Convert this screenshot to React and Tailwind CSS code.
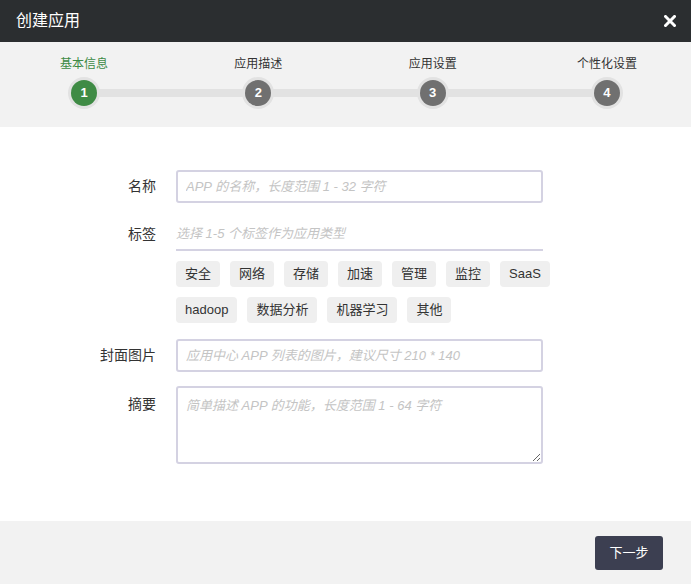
import { useState } from "react";

const steps = ["基本信息", "应用描述", "应用设置", "个性化设置"];
const tagRows = [
  ["安全", "网络", "存储", "加速", "管理", "监控", "SaaS"],
  ["hadoop", "数据分析", "机器学习", "其他"],
];

function Step({ index, label, active }) {
  return (
    <div className="flex w-[32px] flex-col items-center">
      <span
        className={`whitespace-nowrap text-[12px] leading-[14px] ${
          active ? "text-[#3d8a45]" : "text-[#333]"
        }`}
      >
        {label}
      </span>
      <div className="mt-[6px] flex h-[32px] w-[32px] items-center justify-center rounded-full bg-[#e2e2e2]">
        <div
          className={`flex h-[26px] w-[26px] items-center justify-center rounded-full text-[13px] font-bold text-white ${
            active ? "bg-[#3f8b45]" : "bg-[#707070]"
          }`}
        >
          {index}
        </div>
      </div>
    </div>
  );
}

function Row({ label, children, top }) {
  return (
    <div className="flex">
      <label
        className={`w-[156px] shrink-0 text-right text-[14px] text-[#333] ${
          top ? "pt-[8px]" : "self-center"
        }`}
      >
        {label}
      </label>
      <div className="ml-[20px] w-[367px]">{children}</div>
    </div>
  );
}

export default function App() {
  const [picked, setPicked] = useState([]);

  const toggle = (t) =>
    setPicked((p) => (p.includes(t) ? p.filter((x) => x !== t) : [...p, t]));

  return (
    <div className="flex h-[584px] w-[691px] flex-col bg-white font-['Liberation_Sans','Noto_Sans_CJK_SC',sans-serif]">
      <div className="flex h-[42px] shrink-0 items-center justify-between bg-[#2b2e30] pl-[16px] pr-[9px]">
        <h1 className="text-[16px] text-white">创建应用</h1>
        <button className="flex h-[24px] w-[24px] items-center justify-center text-white">
          <svg width="12" height="12" viewBox="0 0 12 12">
            <path d="M1.5 1.5 L10.5 10.5 M10.5 1.5 L1.5 10.5" stroke="currentColor" strokeWidth="3" strokeLinecap="square" />
          </svg>
        </button>
      </div>

      <div className="h-[85px] shrink-0 bg-[#f2f2f2] pt-[15px]">
        <div className="relative flex justify-between px-[68px]">
          <div className="absolute left-[84px] right-[84px] top-[32px] h-[8px] bg-[#e2e2e2]" />
          {steps.map((s, i) => (
            <div key={s} className="relative">
              <Step index={i + 1} label={s} active={i === 0} />
            </div>
          ))}
        </div>
      </div>

      <div className="flex-1 pt-[43px]">
        <Row label="名称">
          <input
            className="h-[33px] w-full rounded-[3px] border-2 border-[#d4d2e2] px-[8px] text-[13px] outline-none placeholder:italic placeholder:text-[#c4c4c4]"
            placeholder="APP 的名称，长度范围 1 - 32 字符"
          />
        </Row>

        <div className="mt-[15px]">
          <Row label="标签">
            <input
              className="h-[33px] w-full border-b-2 border-[#d4d2e2] px-0 text-[13px] outline-none placeholder:italic placeholder:text-[#c4c4c4]"
              placeholder="选择 1-5 个标签作为应用类型"
            />
          </Row>
        </div>

        <div className="ml-[176px] mt-[10px] flex flex-col gap-[10px]">
          {tagRows.map((row, r) => (
            <div key={r} className="flex gap-[10px]">
              {row.map((t) => (
                <button
                  key={t}
                  onClick={() => toggle(t)}
                  className={`h-[26px] rounded-[4px] px-[9px] text-[13px] ${
                    picked.includes(t) ? "bg-[#3f8b45] text-white" : "bg-[#efefef] text-[#333]"
                  }`}
                >
                  {t}
                </button>
              ))}
            </div>
          ))}
        </div>

        <div className="mt-[16px]">
          <Row label="封面图片">
            <input
              className="h-[33px] w-full rounded-[3px] border-2 border-[#d4d2e2] px-[8px] text-[13px] outline-none placeholder:italic placeholder:text-[#c4c4c4]"
              placeholder="应用中心 APP 列表的图片，建议尺寸 210 * 140"
            />
          </Row>
        </div>

        <div className="mt-[14px]">
          <Row label="摘要" top>
            <textarea
              className="block h-[78px] w-full rounded-[3px] border-2 border-[#d4d2e2] px-[8px] py-[8px] text-[13px] outline-none placeholder:italic placeholder:text-[#c4c4c4]"
              placeholder="简单描述 APP 的功能，长度范围 1 - 64 字符"
            />
          </Row>
        </div>
      </div>

      <div className="flex h-[63px] shrink-0 items-center justify-end bg-[#f2f2f2] pr-[28px]">
        <button className="h-[34px] w-[68px] rounded-[3px] bg-[#3c3f51] text-[13px] text-white">
          下一步
        </button>
      </div>
    </div>
  );
}
